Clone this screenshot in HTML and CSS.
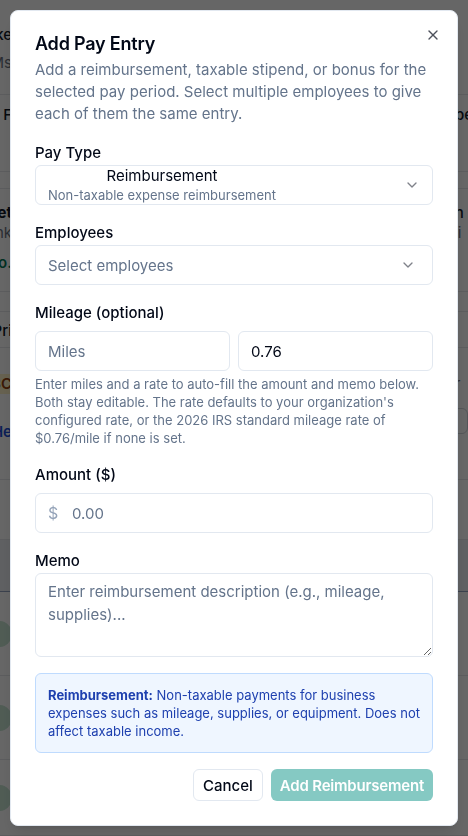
FILE: index.html
```html
<!DOCTYPE html>
<html lang="en">
<head>
<meta charset="utf-8">
<title>Add Pay Entry</title>
<link rel="stylesheet" href="styles.css">
</head>
<body>
<main class="page" aria-hidden="true">
  <div class="bg-row bg-head">
    <div class="bg-left"><span class="bg-strong">Bike</span><span class="bg-muted">Ms</span></div>
    <div class="bg-right"></div>
  </div>
  <div class="bg-row bg-r2">
    <div class="bg-left"><span class="bg-strong">F</span></div>
    <div class="bg-right"><span class="bg-strong">nber</span></div>
  </div>
  <div class="bg-row bg-r3"></div>
  <div class="bg-row bg-r4">
    <div class="bg-left"><span class="bg-bold">Net</span><span class="bg-muted">Bank</span><span class="bg-green">Too.</span></div>
    <div class="bg-right"><span class="bg-strong">yn</span><span class="bg-muted">rri</span></div>
  </div>
  <div class="bg-row bg-r5"></div>
  <div class="bg-row bg-r6">
    <div class="bg-left"><span class="bg-strong">Pri</span></div>
    <div class="bg-right"><span class="bg-muted">⌄</span></div>
  </div>
  <div class="bg-row bg-r7">
    <div class="bg-left"><span class="bg-orange">$3C</span><span class="bg-blue">He</span></div>
    <div class="bg-right"><span class="bg-muted">er</span><span class="bg-box"></span></div>
  </div>
  <div class="bg-row bg-r8"></div>
  <div class="bg-row bg-r9"></div>
  <div class="bg-row bg-r10"><span class="bg-dot"></span></div>
  <div class="bg-row bg-r11"><span class="bg-dot"></span></div>
  <div class="bg-row bg-r12"><span class="bg-dot"></span></div>
</main>

<div class="overlay"></div>

<div class="dialog" role="dialog" aria-labelledby="dlg-title">
  <button class="close" type="button" aria-label="Close">
    <svg viewBox="0 0 24 24" width="16" height="16" fill="none" stroke="currentColor" stroke-width="2" stroke-linecap="round" stroke-linejoin="round"><path d="M18 6 6 18"/><path d="m6 6 12 12"/></svg>
  </button>

  <header class="dialog-header">
    <h2 class="title" id="dlg-title">Add Pay Entry</h2>
    <p class="desc">Add a reimbursement, taxable stipend, or bonus for the selected pay period. Select multiple employees to give each of them the same entry.</p>
  </header>

  <form class="form">
    <div class="field">
      <label class="label">Pay Type</label>
      <button type="button" class="select">
        <span class="opt">
          <span class="opt-title">Reimbursement</span>
          <span class="opt-sub">Non-taxable expense reimbursement</span>
        </span>
        <svg class="chev" viewBox="0 0 24 24" width="16" height="16" fill="none" stroke="currentColor" stroke-width="2" stroke-linecap="round" stroke-linejoin="round"><path d="m6 9 6 6 6-6"/></svg>
      </button>
    </div>

    <div class="field">
      <label class="label">Employees</label>
      <button type="button" class="select select-emp">
        <span class="placeholder">Select employees</span>
        <svg class="chev" viewBox="0 0 24 24" width="16" height="16" fill="none" stroke="currentColor" stroke-width="2" stroke-linecap="round" stroke-linejoin="round"><path d="m6 9 6 6 6-6"/></svg>
      </button>
    </div>

    <div class="field field-spaced">
      <label class="label">Mileage (optional)</label>
      <div class="pair">
        <input class="input" type="text" placeholder="Miles">
        <input class="input" type="text" value="0.76">
      </div>
      <p class="help">Enter miles and a rate to auto-fill the amount and memo below. Both stay editable. The rate defaults to your organization's configured rate, or the 2026 IRS standard mileage rate of $0.76/mile if none is set.</p>
    </div>

    <div class="field field-spaced">
      <label class="label">Amount ($)</label>
      <div class="money">
        <span class="money-sign">$</span>
        <input class="input input-money" type="text" placeholder="0.00">
      </div>
    </div>

    <div class="field">
      <label class="label">Memo</label>
      <textarea class="textarea" placeholder="Enter reimbursement description (e.g., mileage, supplies)..."></textarea>
    </div>

    <div class="info">
      <strong>Reimbursement:</strong> Non-taxable payments for business expenses such as mileage, supplies, or equipment. Does not affect taxable income.
    </div>

    <div class="footer">
      <button type="button" class="btn btn-outline">Cancel</button>
      <button type="button" class="btn btn-primary" disabled>Add Reimbursement</button>
    </div>
  </form>
</div>
</body>
</html>
```

FILE: styles.css
```css
* { box-sizing: border-box; }

html, body {
  margin: 0;
  height: 100%;
}

body {
  font-family: Inter, "Noto Sans", sans-serif;
  background: #ffffff;
  color: #020817;
  overflow: hidden;
}

/* ---------- background page (dimmed) ---------- */
.page {
  display: flex;
  flex-direction: column;
  width: 468px;
  height: 836px;
  font-size: 15px;
  line-height: 20px;
}

.bg-row {
  display: flex;
  justify-content: space-between;
  align-items: flex-start;
  border-bottom: 1px solid #e5e7eb;
  flex: none;
}

.bg-left {
  width: 12px;
  display: flex;
  flex-direction: column;
  align-items: flex-end;
  white-space: nowrap;
}

.bg-right {
  width: 22px;
  display: flex;
  flex-direction: column;
  align-items: flex-start;
  white-space: nowrap;
  overflow: hidden;
}

.bg-strong { color: #111827; font-weight: 500; }
.bg-bold { color: #111827; font-weight: 700; }
.bg-muted { color: #6b7280; }
.bg-green { color: #047857; font-weight: 600; }
.bg-orange { color: #92400e; font-weight: 600; background: #fef3c7; }
.bg-blue { color: #1d4ed8; font-weight: 600; }
.bg-box {
  display: block;
  width: 22px;
  height: 26px;
  border: 1px solid #d1d5db;
  border-radius: 6px;
  margin-top: 14px;
}

.bg-head { height: 95px; padding-top: 25px; }
.bg-head .bg-left { gap: 8px; }
.bg-r2 { height: 77px; padding-top: 10px; }
.bg-r3 { height: 17px; }
.bg-r4 { height: 103px; padding-top: 14px; }
.bg-r4 .bg-left span:last-child { margin-top: 10px; }
.bg-r5 { height: 20px; }
.bg-r6 { height: 36px; padding-top: 9px; }
.bg-r7 { height: 132px; padding-top: 26px; }
.bg-r7 .bg-left { gap: 28px; }
.bg-r8 { height: 60px; }
.bg-r9 { height: 52px; background: #eef0f4; border-bottom: 1px solid #93a3c0; }
.bg-r10, .bg-r11 { height: 84px; align-items: center; }
.bg-r12 { flex: 1; align-items: center; }
.bg-dot {
  display: block;
  width: 26px;
  height: 26px;
  border-radius: 50%;
  background: #c7e6d3;
  margin-left: -14px;
}

/* ---------- overlay & dialog ---------- */
.overlay {
  position: fixed;
  inset: 0;
  background: rgba(0, 0, 0, 0.6);
}

.dialog {
  position: fixed;
  left: 10px;
  top: 10px;
  width: 448px;
  background: #ffffff;
  border: 1px solid #e2e8f0;
  border-radius: 8px;
  padding: 24px;
  display: flex;
  flex-direction: column;
  gap: 16px;
  box-shadow: 0 10px 15px -3px rgba(0, 0, 0, 0.1), 0 4px 6px -4px rgba(0, 0, 0, 0.1);
}

.close {
  position: absolute;
  top: 16px;
  right: 16px;
  width: 16px;
  height: 16px;
  padding: 0;
  border: 0;
  background: transparent;
  color: #020817;
  opacity: 0.7;
  display: flex;
  cursor: pointer;
}

.dialog-header {
  display: flex;
  flex-direction: column;
  gap: 6px;
}

.title {
  margin: 0;
  font-size: 18px;
  line-height: 18px;
  font-weight: 600;
  letter-spacing: -0.2px;
  color: #020817;
}

.desc {
  margin: 0;
  font-size: 15px;
  line-height: 22px;
  color: #64748b;
}

.form {
  display: flex;
  flex-direction: column;
  gap: 16px;
  margin: 0;
}

.field {
  display: flex;
  flex-direction: column;
}

.field-spaced .label { margin-bottom: 6px; }

.label {
  font-size: 15px;
  line-height: 24px;
  font-weight: 500;
  color: #020817;
}

.select {
  display: flex;
  align-items: center;
  justify-content: space-between;
  width: 100%;
  height: 40px;
  padding: 0 12px;
  border: 1px solid #e2e8f0;
  border-radius: 6px;
  background: #ffffff;
  font: inherit;
  color: #020817;
  text-align: left;
  cursor: pointer;
}

.select-emp { padding-right: 16px; }

.opt {
  display: flex;
  flex-direction: column;
  align-items: center;
  gap: 2px;
}

.opt-title {
  font-size: 15px;
  line-height: 19px;
  color: #020817;
}

.opt-sub {
  font-size: 13px;
  line-height: 17px;
  color: #64748b;
}

.placeholder {
  font-size: 15px;
  color: #64748b;
}

.chev {
  flex: none;
  color: #020817;
  opacity: 0.5;
}

.pair {
  display: grid;
  grid-template-columns: 1fr 1fr;
  gap: 8px;
}

.input {
  width: 100%;
  height: 40px;
  padding: 0 12px;
  border: 1px solid #e2e8f0;
  border-radius: 6px;
  background: #ffffff;
  font-family: inherit;
  font-size: 15px;
  color: #020817;
  outline: none;
}

.input::placeholder,
.textarea::placeholder {
  color: #64748b;
  opacity: 1;
}

.help {
  margin: 4px 0 0;
  font-size: 13px;
  line-height: 18px;
  color: #64748b;
}

.money {
  position: relative;
}

.money-sign {
  position: absolute;
  left: 13px;
  top: 0;
  height: 40px;
  display: flex;
  align-items: center;
  font-size: 16px;
  color: #94a3b8;
}

.input-money { padding-left: 36px; }

.textarea {
  display: block;
  width: 100%;
  height: 84px;
  padding: 6px 12px;
  border: 1px solid #e2e8f0;
  border-radius: 6px;
  background: #ffffff;
  font-family: inherit;
  font-size: 15px;
  line-height: 23px;
  color: #020817;
  outline: none;
  resize: vertical;
}

.info {
  padding: 12px;
  border: 1px solid #bfdbfe;
  border-radius: 6px;
  background: #eff6ff;
  font-size: 13px;
  line-height: 18px;
  color: #1e40af;
}

.info strong { font-weight: 700; }

.footer {
  display: flex;
  justify-content: flex-end;
  gap: 8px;
}

.btn {
  height: 32px;
  padding: 0 8px;
  border: 1px solid transparent;
  border-radius: 6px;
  font-family: inherit;
  font-size: 15px;
  font-weight: 500;
  cursor: pointer;
}

.btn-outline {
  background: #ffffff;
  border-color: #e2e8f0;
  color: #020817;
  padding: 0 9px;
}

.btn-primary {
  background: #0d9488;
  color: #ffffff;
  font-weight: 600;
  letter-spacing: -0.2px;
  opacity: 0.5;
}
```
